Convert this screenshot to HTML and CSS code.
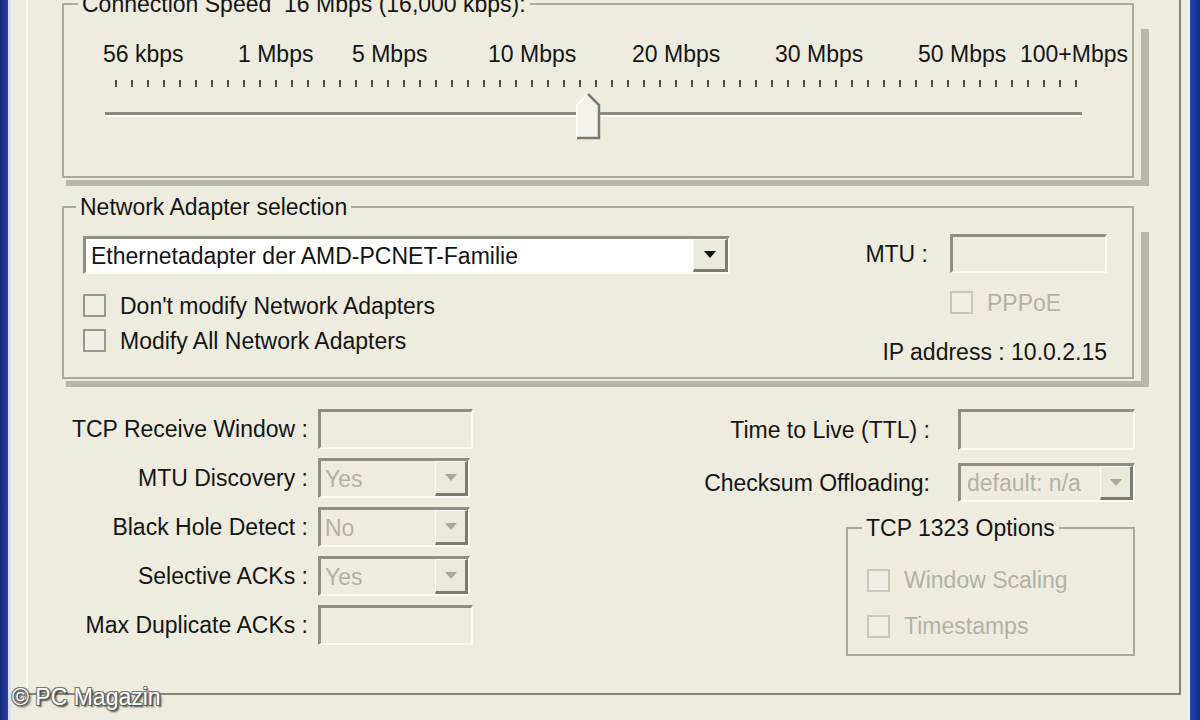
FILE: index.html
```html
<!DOCTYPE html>
<html lang="en">

<head>
    <meta charset="UTF-8">
    <title>TCP Optimizer - General Settings</title>
    <link rel="stylesheet" href="styles.css">
</head>

<body>
    <div class="window">
        <div class="frame-left"></div>

        <div class="client">
            <div class="tab-page">

                <!-- Connection speed slider -->
                <div class="group-frame group-speed">
                    <fieldset class="group">
                        <legend>Connection Speed&nbsp; 16 Mbps (16,000 kbps):</legend>
                        <div class="slider">
                            <div class="scale">
                                <span style="left: 39px">56 kbps</span>
                                <span style="left: 174px">1 Mbps</span>
                                <span style="left: 288px">5 Mbps</span>
                                <span style="left: 424px">10 Mbps</span>
                                <span style="left: 568px">20 Mbps</span>
                                <span style="left: 711px">30 Mbps</span>
                                <span style="left: 854px">50 Mbps</span>
                                <span style="left: 956px">100+Mbps</span>
                            </div>
                            <div class="ticks"></div>
                            <div class="track"></div>
                            <svg class="thumb" width="26" height="48" viewBox="0 0 26 48">
                                <path d="M2 46 V13 L13 2 L24 13 V46 Z" fill="#f4f2ea"/>
                                <path d="M2 46 V13 L13 2" fill="none" stroke="#ffffff" stroke-width="2"/>
                                <path d="M13 2 L24 13 V46 H2" fill="none" stroke="#7b7a70" stroke-width="2.5"/>
                            </svg>
                        </div>
                    </fieldset>
                </div>

                <!-- Network adapter -->
                <div class="group-frame group-adapter">
                    <fieldset class="group">
                        <legend>Network Adapter selection</legend>
                        <div class="adapter">
                            <div class="adapter-left">
                                <div class="combo combo-on adapter-combo">
                                    <span class="combo-value">Ethernetadapter der AMD-PCNET-Familie</span>
                                    <span class="combo-btn">
                                        <svg width="12" height="7" viewBox="0 0 12 7"><path d="M0 0H12L6 7Z"/></svg>
                                    </span>
                                </div>
                                <div class="check-row first">
                                    <span class="check"></span>Don't modify Network Adapters
                                </div>
                                <div class="check-row">
                                    <span class="check"></span>Modify All Network Adapters
                                </div>
                            </div>

                            <div class="adapter-right">
                                <div class="mtu-row">
                                    <span>MTU :</span>
                                    <div class="field mtu-field"></div>
                                </div>
                                <div class="check-row pppoe disabled">
                                    <span class="check"></span>PPPoE
                                </div>
                                <div class="ip-row">IP address : 10.0.2.15</div>
                            </div>
                        </div>
                    </fieldset>
                </div>

                <!-- TCP parameters -->
                <div class="params">
                    <div class="param-grid left-grid">
                        <label>TCP Receive Window :</label>
                        <div class="field"></div>

                        <label>MTU Discovery :</label>
                        <div class="combo">
                            <span class="combo-value">Yes</span>
                            <span class="combo-btn"><svg width="12" height="7" viewBox="0 0 12 7"><path d="M0 0H12L6 7Z"/></svg></span>
                        </div>

                        <label>Black Hole Detect :</label>
                        <div class="combo">
                            <span class="combo-value">No</span>
                            <span class="combo-btn"><svg width="12" height="7" viewBox="0 0 12 7"><path d="M0 0H12L6 7Z"/></svg></span>
                        </div>

                        <label>Selective ACKs :</label>
                        <div class="combo">
                            <span class="combo-value">Yes</span>
                            <span class="combo-btn"><svg width="12" height="7" viewBox="0 0 12 7"><path d="M0 0H12L6 7Z"/></svg></span>
                        </div>

                        <label>Max Duplicate ACKs :</label>
                        <div class="field"></div>
                    </div>

                    <div class="right-col">
                        <div class="param-grid right-grid">
                            <label>Time to Live (TTL) :</label>
                            <div class="field"></div>

                            <label>Checksum Offloading:</label>
                            <div class="combo">
                                <span class="combo-value">default: n/a</span>
                                <span class="combo-btn"><svg width="12" height="7" viewBox="0 0 12 7"><path d="M0 0H12L6 7Z"/></svg></span>
                            </div>
                        </div>

                        <fieldset class="group group-1323">
                            <legend>TCP 1323 Options</legend>
                            <div class="check-row disabled first">
                                <span class="check"></span>Window Scaling
                            </div>
                            <div class="check-row disabled">
                                <span class="check"></span>Timestamps
                            </div>
                        </fieldset>
                    </div>
                </div>

            </div>
        </div>

        <div class="frame-right"></div>

        <div class="watermark">&copy; PC Magazin</div>
    </div>
</body>

</html>
```

FILE: styles.css
```css
html,
body {
    margin: 0;
    height: 100%;
}

body {
    background: #eeecdf;
    font-family: "Liberation Sans", Arial, sans-serif;
    font-size: 23px;
    line-height: 24px;
    color: #141414;
    overflow: hidden;
}

/* Window frame */
.window {
    display: flex;
    height: 720px;
    position: relative;
}

.frame-left {
    width: 8px;
    background: linear-gradient(to right, #17287c, #2641a6);
    border-right: 3px solid #d7e1f1;
}

.frame-right {
    width: 10px;
    background: linear-gradient(to right, #2746ad, #102a8c);
    border-left: 2px solid #eef3fb;
}

.client {
    flex: 1;
    padding: 0 7px 0 15px;
}

.tab-page {
    display: flow-root;
    height: 695px;
    box-sizing: border-box;
    border-left: 2px solid #fbfbf7;
    border-right: 2px solid #85847a;
    border-bottom: 2px solid #85847a;
}

/* Group boxes */
.group {
    margin: 0;
    padding: 0;
    min-width: 0;
    border: 2px solid #aaa99d;
}

.group legend {
    padding: 0 4px;
    margin-left: 14px;
    line-height: 24px;
}

.group-frame {
    position: relative;
    width: 1072px;
    margin-left: 34px;
}

/* grey bevel shadow right and below the frame */
.group-frame::after {
    content: "";
    position: absolute;
    top: 37px;
    right: -15px;
    bottom: -8px;
    width: 8px;
    background: #b8b6a9;
}

.group-frame::before {
    content: "";
    position: absolute;
    left: 4px;
    right: -15px;
    bottom: -8px;
    height: 6px;
    background: #b8b6a9;
}

.group-speed {
    margin-top: -8px;
}

.group-adapter {
    margin-top: 17px;
}

.group-adapter legend {
    margin-left: 12px;
}

/* Slider */
.slider {
    position: relative;
    height: 160px;
    overflow: hidden;
}

.scale {
    position: relative;
    height: 24px;
    margin-top: 26px;
}

.scale span {
    position: absolute;
    top: 0;
    white-space: nowrap;
}

.ticks {
    width: 962px;
    height: 7px;
    margin: 14px 0 0 51px;
    background-image: linear-gradient(to right, #4d4c45 2px, transparent 2px);
    background-size: 16px 100%;
}

.track {
    width: 977px;
    height: 0;
    margin: 25px 0 0 41px;
    border-top: 3px solid #8c8b81;
    border-bottom: 2px solid #fdfdf8;
}

.thumb {
    position: absolute;
    left: 511px;
    top: 76px;
}

/* Adapter group */
.adapter {
    display: flex;
    height: 158px;
    padding-left: 19px;
}

.adapter-left {
    display: flex;
    flex-direction: column;
}

.adapter-combo {
    width: 647px;
    height: 38px;
    margin-top: 17px;
}

.adapter-right {
    margin-left: auto;
    margin-right: 25px;
    display: flex;
    flex-direction: column;
    align-items: flex-end;
}

.mtu-row {
    display: flex;
    align-items: center;
    gap: 22px;
    margin-top: 15px;
}

.mtu-field {
    width: 157px;
    height: 39px;
}

.pppoe {
    width: 157px;
    height: 30px;
    margin-top: 12px;
    gap: 13px;
}

.ip-row {
    margin-top: 17px;
    line-height: 30px;
}

/* Checkboxes */
.check-row {
    display: flex;
    align-items: center;
    gap: 14px;
    height: 35px;
    white-space: nowrap;
}

.adapter-left .check-row.first {
    margin-top: 14px;
}

.check {
    width: 23px;
    height: 23px;
    box-sizing: border-box;
    border: 2px solid #9a998e;
    background: #f1efe5;
    flex: none;
}

.check-row.disabled {
    color: #b3b1a5;
}

.check-row.disabled .check {
    border-color: #c9c7ba;
}

/* Edit fields and combos */
.field,
.combo {
    box-sizing: border-box;
    border-style: solid;
    border-width: 3px 2px 2px 3px;
    border-color: #8f8e84 #fbfaf3 #fbfaf3 #8f8e84;
    background: #eeecdf;
}

.combo {
    display: flex;
    color: #b3b1a5;
}

.combo-value {
    flex: 1;
    padding-left: 4px;
    align-self: center;
    white-space: nowrap;
    overflow: hidden;
}

.combo-btn {
    width: 33px;
    box-sizing: border-box;
    border-style: solid;
    border-width: 1px 3px 3px 1px;
    border-color: #f8f7f0 #7c7b71 #7c7b71 #f8f7f0;
    background: #ebe9dc;
    display: flex;
    align-items: center;
    justify-content: center;
    color: #a9a79a;
}

.combo-btn svg {
    fill: currentColor;
}

.combo-on {
    background: #ffffff;
    color: #141414;
}

.combo-on .combo-value {
    padding-left: 5px;
}

.combo-on .combo-btn {
    width: 35px;
    color: #111111;
}

/* Parameters */
.params {
    display: flex;
    justify-content: space-between;
    margin-top: 30px;
    padding: 0 44px 0 30px;
}

.param-grid {
    display: grid;
    align-items: center;
    white-space: nowrap;
}

.param-grid label {
    justify-self: end;
}

.left-grid {
    grid-template-columns: 250px 155px;
    grid-auto-rows: 40px;
    column-gap: 10px;
    row-gap: 9px;
}

.left-grid .field,
.left-grid .combo {
    height: 40px;
}

.left-grid .combo {
    width: 152px;
}

.right-col {
    display: flex;
    flex-direction: column;
    align-items: flex-end;
}

.right-grid {
    grid-template-columns: auto 177px;
    grid-template-rows: 41px 39px;
    column-gap: 28px;
    row-gap: 13px;
}

.right-grid .field,
.right-grid .combo {
    height: 100%;
}

.right-grid .combo-value {
    padding-left: 6px;
}

.group-1323 {
    width: 289px;
    margin-top: 14px;
    padding: 0 0 5px 19px;
    box-sizing: border-box;
}

.group-1323 legend {
    margin-left: -5px;
}

.group-1323 .check-row {
    height: 46px;
}

.group-1323 .check-row.first {
    margin-top: 17px;
}

/* Watermark */
.watermark {
    position: absolute;
    left: 12px;
    top: 684px;
    font-size: 23px;
    line-height: 26px;
    color: #ffffff;
    text-shadow: 1px 1px 0 #55554f, -1px -1px 0 #77776f, 1px -1px 0 #77776f, -1px 1px 0 #77776f, 2px 2px 2px #333333;
}
```
